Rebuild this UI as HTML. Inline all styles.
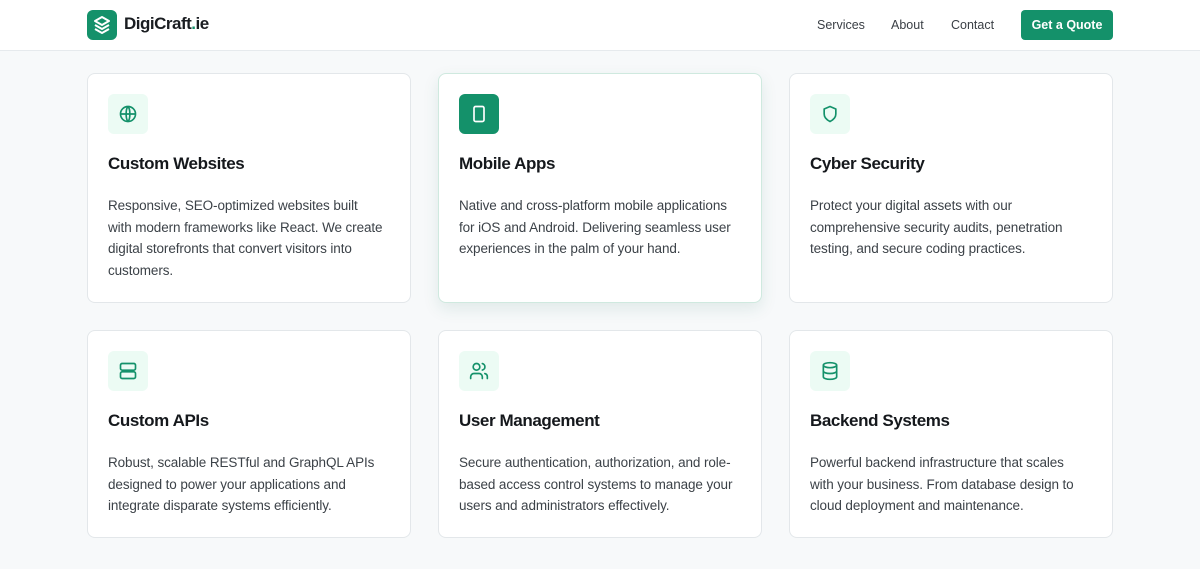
<!DOCTYPE html>
<html><head><meta charset="utf-8"><style>
*{box-sizing:border-box;margin:0;padding:0}
body{width:1200px;height:569px;overflow:hidden;background:#f7f9fa;font-family:"Liberation Sans",sans-serif;position:relative}
.hdr{position:absolute;left:0;top:0;width:1200px;height:51px;background:#fff;border-bottom:1px solid #e6eaed}
.logo{position:absolute;left:87px;top:10px;width:30px;height:30px;border-radius:6px;background:#14916a}
.brand{position:absolute;left:124px;top:14px;font-size:17px;font-weight:bold;color:#1a1d21;letter-spacing:-0.5px}
.brand span{color:#14916a}
.nav{position:absolute;top:18px;font-size:12.5px;color:#3a3f45}
.btn{position:absolute;left:1021px;top:10px;width:92px;height:30px;border-radius:4px;background:#14916a;color:#fff;font-size:12.5px;font-weight:bold;text-align:center;line-height:30px}
.card{position:absolute;width:324px;background:#fff;border:1px solid #e3e7ea;border-radius:8px;padding:20px 20px}
.card.act{border-color:#cfe9df;box-shadow:0 6px 16px rgba(20,100,80,.1)}
.ic{width:40px;height:40px;border-radius:6px;background:#ecfbf4;display:flex;align-items:center;justify-content:center}
.act .ic{background:#14916a}
h3{font-size:17px;font-weight:bold;color:#15181c;margin-top:20px;letter-spacing:-0.4px;line-height:20px}
p{font-size:13.5px;color:#3c4248;line-height:21.5px;margin-top:21px;letter-spacing:-0.1px;white-space:nowrap}
</style></head><body>
<div class="hdr">
<div class="logo"><svg width="30" height="30" viewBox="0 0 30 30" fill="none" stroke="#fff" stroke-width="2" stroke-linejoin="round"><path d="M15 7l-7 4 7 4 7-4z"/><path d="M8 15l7 4 7-4"/><path d="M8 19l7 4 7-4"/></svg></div>
<div class="brand">DigiCraft<span>.</span>ie</div>
<div class="nav" style="left:817px">Services</div>
<div class="nav" style="left:891px">About</div>
<div class="nav" style="left:951px">Contact</div>
<div class="btn">Get a Quote</div>
</div>

<div class="card" style="left:87px;top:73px;height:230px">
<div class="ic"><svg width="20" height="20" viewBox="0 0 24 24" fill="none" stroke="#14916a" stroke-width="2"><circle cx="12" cy="12" r="9"/><path d="M3 12h18M12 3c3 3 3 15 0 18M12 3c-3 3-3 15 0 18"/></svg></div>
<h3>Custom Websites</h3>
<p>Responsive, SEO-optimized websites built<br>with modern frameworks like React. We create<br>digital storefronts that convert visitors into<br>customers.</p></div>

<div class="card act" style="left:438px;top:73px;height:230px">
<div class="ic"><svg width="20" height="20" viewBox="0 0 24 24" fill="none" stroke="#fff" stroke-width="2"><rect x="6" y="3" width="12" height="18" rx="2"/><path d="M12 17h.01"/></svg></div>
<h3>Mobile Apps</h3>
<p>Native and cross-platform mobile applications<br>for iOS and Android. Delivering seamless user<br>experiences in the palm of your hand.</p></div>

<div class="card" style="left:789px;top:73px;height:230px">
<div class="ic"><svg width="20" height="20" viewBox="0 0 24 24" fill="none" stroke="#14916a" stroke-width="2" stroke-linejoin="round"><path d="M12 3l7 3v6c0 4-3 7-7 9-4-2-7-5-7-9V6z"/></svg></div>
<h3>Cyber Security</h3>
<p>Protect your digital assets with our<br>comprehensive security audits, penetration<br>testing, and secure coding practices.</p></div>

<div class="card" style="left:87px;top:330px;height:208px">
<div class="ic"><svg width="20" height="20" viewBox="0 0 24 24" fill="none" stroke="#14916a" stroke-width="2"><rect x="3" y="3" width="18" height="8" rx="2"/><rect x="3" y="13" width="18" height="8" rx="2"/><path d="M7 7h.01M7 17h.01"/></svg></div>
<h3>Custom APIs</h3>
<p>Robust, scalable RESTful and GraphQL APIs<br>designed to power your applications and<br>integrate disparate systems efficiently.</p></div>

<div class="card" style="left:438px;top:330px;height:208px">
<div class="ic"><svg width="20" height="20" viewBox="0 0 24 24" fill="none" stroke="#14916a" stroke-width="2" stroke-linecap="round"><circle cx="9" cy="7" r="4"/><path d="M2 21v-2a4 4 0 0 1 4-4h6a4 4 0 0 1 4 4v2M16 3.1a4 4 0 0 1 0 7.8M22 21v-2a4 4 0 0 0-3-3.9"/></svg></div>
<h3>User Management</h3>
<p>Secure authentication, authorization, and role-<br>based access control systems to manage your<br>users and administrators effectively.</p></div>

<div class="card" style="left:789px;top:330px;height:208px">
<div class="ic"><svg width="20" height="20" viewBox="0 0 24 24" fill="none" stroke="#14916a" stroke-width="2"><ellipse cx="12" cy="5" rx="8" ry="3"/><path d="M4 5v14c0 1.7 3.6 3 8 3s8-1.3 8-3V5M4 12c0 1.7 3.6 3 8 3s8-1.3 8-3"/></svg></div>
<h3>Backend Systems</h3>
<p>Powerful backend infrastructure that scales<br>with your business. From database design to<br>cloud deployment and maintenance.</p></div>
</body></html>
